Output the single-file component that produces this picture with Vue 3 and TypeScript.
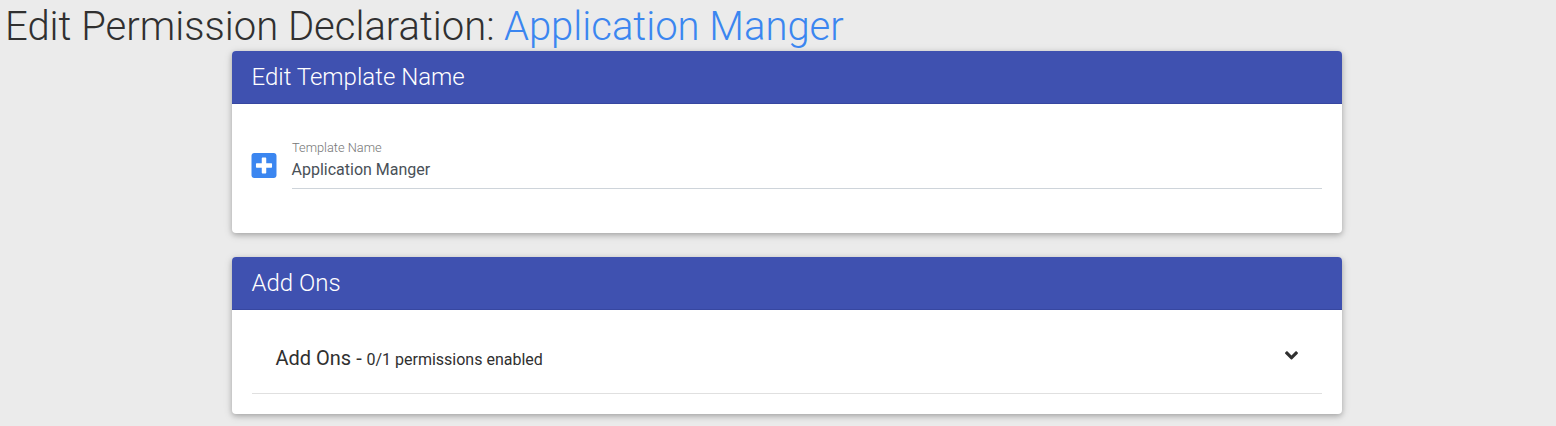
<script setup lang="ts">
const templateName: string = 'Application Manger'
const enabled = 0
const total = 1
</script>

<template>
  <main class="page">
    <h1 class="title">Edit Permission Declaration: <span class="accent">{{ templateName }}</span></h1>
    <div class="cards">
      <section class="card first">
        <header class="head">Edit Template Name</header>
        <div class="form">
          <svg class="plus" viewBox="-9 0 466 448"><path fill="currentColor" d="M400 0H48C21.500 0 0 21.500 0 48v352c0 26.500 21.500 48 48 48h352c26.500 0 48-21.500 48-48V48c0-26.500-21.500-48-48-48zm-32 252c0 6.600-5.400 12-12 12h-92v92c0 6.600-5.400 12-12 12h-56c-6.600 0-12-5.400-12-12v-92H92c-6.600 0-12-5.400-12-12v-56c0-6.600 5.400-12 12-12h92V92c0-6.600 5.400-12 12-12h56c6.600 0 12 5.400 12 12v92h92c6.600 0 12 5.400 12 12v56z" /></svg>
          <div class="field">
            <div class="label">Template Name</div>
            <div class="value">{{ templateName }}</div>
          </div>
        </div>
      </section>
      <section class="card second">
        <header class="head">Add Ons</header>
        <div class="row">
          <div class="row-text">Add Ons - <span class="small">{{ enabled }}/{{ total }} permissions enabled</span></div>
          <svg class="chevron" viewBox="0 0 320 512"><path fill="currentColor" d="M143 352.300L7 216.300c-9.400-9.400-9.400-24.600 0-33.900l22.600-22.600c9.400-9.400 24.600-9.400 33.900 0l96.400 96.400 96.400-96.400c9.400-9.400 24.600-9.400 33.900 0l22.600 22.600c9.400 9.400 9.400 24.600 0 33.900l-136 136c-9.200 9.400-24.400 9.400-33.800 0z" /></svg>
        </div>
      </section>
    </div>
  </main>
</template>

<style>
body { background: #ebebeb; overflow: hidden; }
</style>

<style scoped>
* { box-sizing: border-box; }
.page { font-family: Roboto, sans-serif; color: #303030; padding: 3px 0 0 5px; height: 426px; }
.title { margin: 0; font-size: 40px; font-weight: 300; line-height: 48px; white-space: nowrap; }
.accent { color: #3b86f0; margin-left: -0.5px; }
.cards { width: 1110px; margin-left: 226.5px; }
.card { background: #fff; border-radius: 4px; overflow: hidden; box-shadow: 0 2px 5px rgba(0,0,0,.2), 0 2px 10px rgba(0,0,0,.14); }
.first { height: 182px; margin-bottom: 24px; }
.second { height: 157px; }
.head { height: 53px; padding: 12px 20px; font-size: 24px; font-weight: 300; line-height: 28px; color: #fff; background: #3f51b0; border-bottom: 1px solid #3747a0; }
.form { display: flex; padding: 32px 20px 0 19.5px; }
.plus { width: 26px; height: 25px; margin-top: 17px; color: #3b86f0; }
.field { flex: 1; margin-left: 14.5px; height: 53px; border-bottom: 1px solid #ced4da; }
.label { font-size: 12.8px; line-height: 16px; margin-top: 4px; padding-left: 0.5px; font-weight: 300; color: #757575; }
.value { font-size: 16px; line-height: 24px; margin-top: 2px; color: #495057; }
.row { display: flex; justify-content: space-between; margin: 0 20px; height: 84px; padding: 36px 24px 0; border-bottom: 1px solid #e0e0e0; }
.row-text { font-size: 20px; line-height: 24px; }
.small { font-size: 16px; margin-left: -0.2px; }
.chevron { width: 13px; height: 20.8px; margin-top: -1px; }
</style>
